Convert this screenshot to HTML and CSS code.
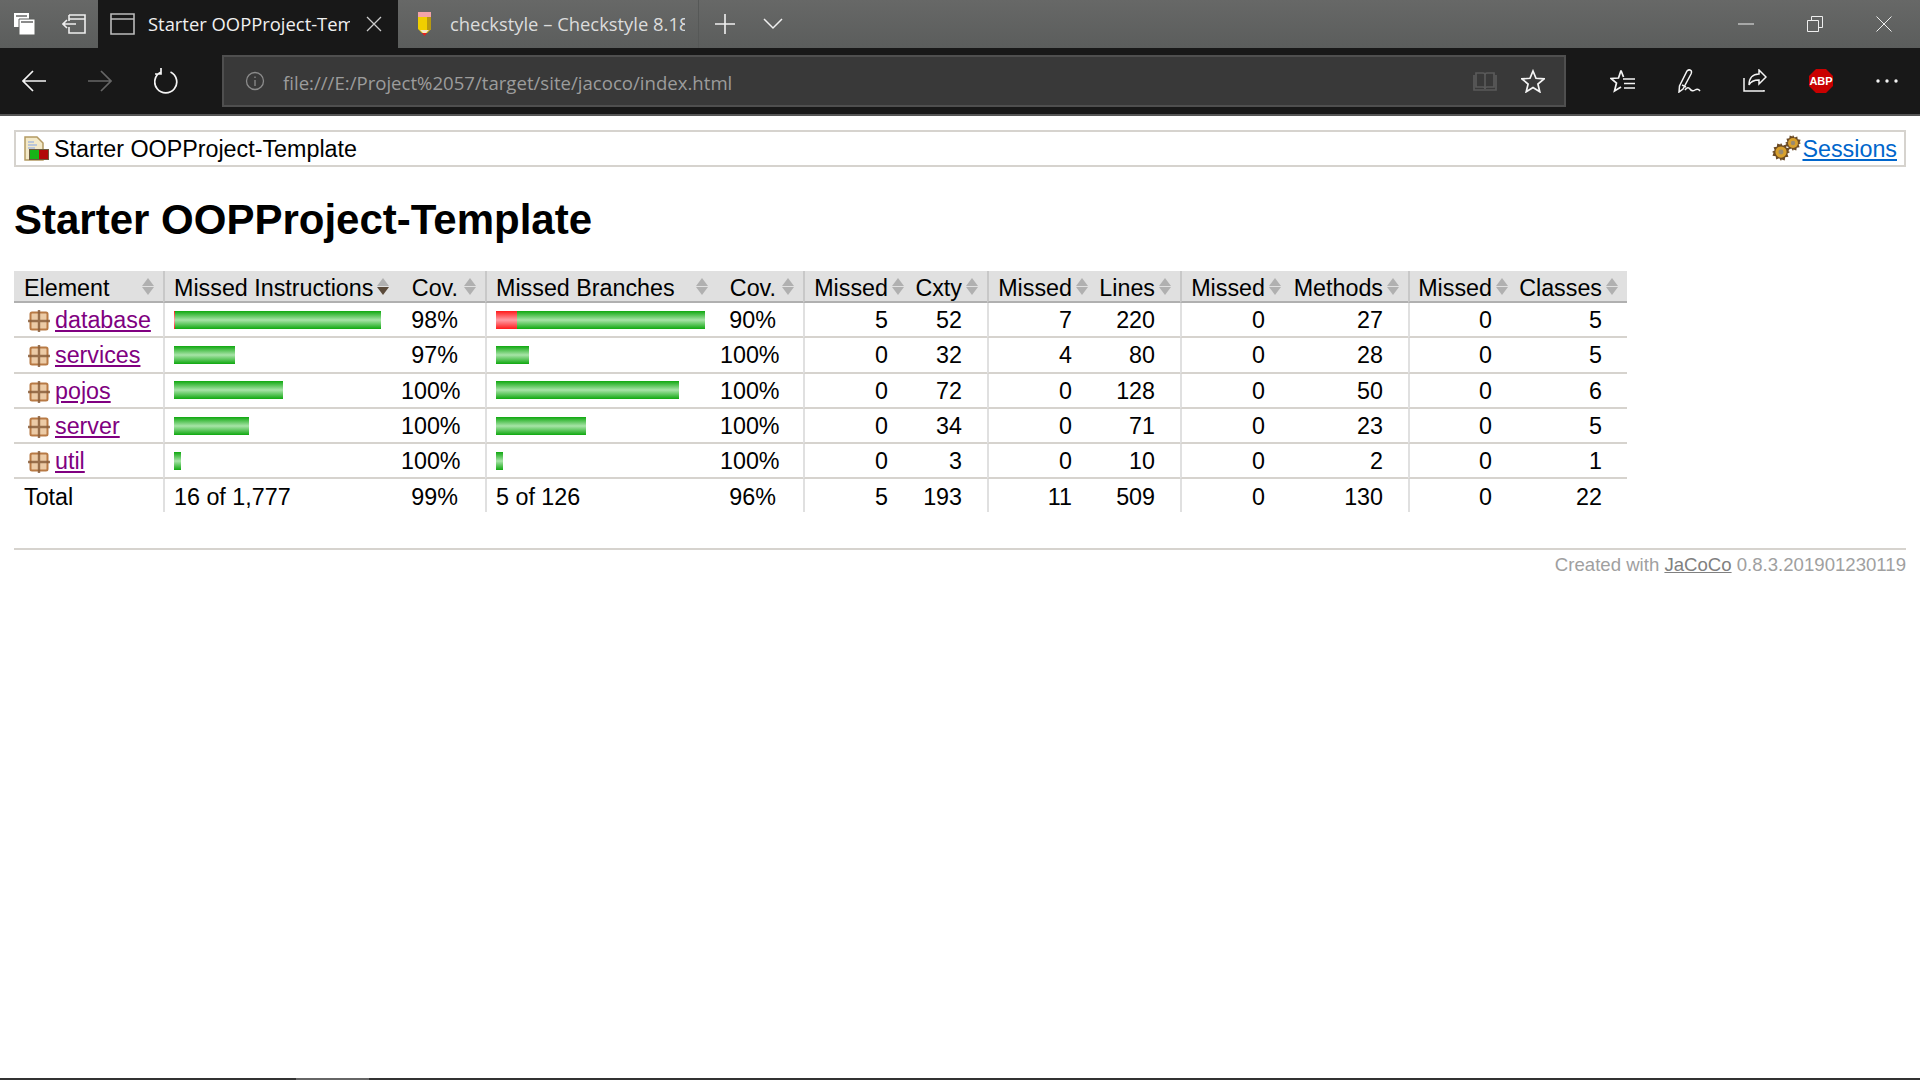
FILE: index.html
```html
<!DOCTYPE html>
<html>
  <head>
    <meta charset="utf-8" />
    <title>Starter OOPProject-Template</title>
    <link rel="stylesheet" href="styles.css">
  </head>
  <body>
    <svg class="defs" width="0" height="0">
      <defs>
        <symbol id="pkg" viewBox="0 0 22 22">
          <rect x="2.500" y="2.500" width="17" height="17" rx="1.500" fill="#eccba6" stroke="#b87a45" stroke-width="2"/>
          <path d="M11 0v22M0 11h22" stroke="#8a5f3c" stroke-width="2.400" opacity=".85"/>
        </symbol>
        <symbol id="gear" viewBox="0 0 16 16">
          <path d="M8 0l1.600 2.400 2.700-1 .4 2.900 2.900.4-1 2.700L16 8l-2.400 1.600 1 2.700-2.900.4-.4 2.900-2.700-1L8 16l-1.600-2.400-2.700 1-.4-2.900-2.900-.4 1-2.700L0 8l2.400-1.600-1-2.700 2.900-.4.4-2.900 2.700 1z" fill="#6b4a24"/>
          <circle cx="8" cy="8" r="5" fill="#d8a02c"/>
          <circle cx="8" cy="8" r="2.200" fill="#9a8a70"/>
        </symbol>
      </defs>
    </svg>

    <div class="tabbar">
      <div class="tab-tools">
        <div class="tool">
          <svg width="24" height="24" viewBox="0 0 24 24"><path d="M1 1h15v14H1z" fill="#fff"/><path d="M6 7h16v16H6z" fill="#fff" stroke="#5f615f"/><path d="M3 4h11M8 10h12" stroke="#666" stroke-width="1.400"/></svg>
        </div>
        <div class="tool">
          <svg width="24" height="24" viewBox="0 0 24 24" fill="none" stroke="#eee" stroke-width="1.600"><path d="M7 3h16v18H7v-6M7 9V3M7 7h16"/><path d="M1 12h13M5 8l-4 4 4 4"/></svg>
        </div>
      </div>
      <div class="tab tab-active">
        <svg class="tab-icon" width="25" height="24" viewBox="0 0 25 24" fill="none" stroke="#bbb" stroke-width="1.600"><path d="M1 2h23v20H1zM1 7h23"/></svg>
        <span class="tab-title">Starter OOPProject-Template</span>
        <svg class="tab-close" width="16" height="16" viewBox="0 0 16 16" stroke="#ccc" stroke-width="1.300"><path d="M1 1l14 14M15 1L1 15"/></svg>
      </div>
      <div class="tab">
        <svg class="tab-icon" width="25" height="26" viewBox="0 0 25 26"><path d="M6 1h13v5H6z" fill="#f2a3a8"/><path d="M6 6h13v12l-4 4h-5l-4-4z" fill="#f0cf00"/><path d="M15 6h4v12l-4 4z" fill="#b89a10"/><path d="M8 19h9l-3 3h-3z" fill="#f6e9c8"/><path d="M10 22h5l-2.500 3z" fill="#e8211c"/></svg>
        <span class="tab-title tab-title-dim">checkstyle – Checkstyle 8.18</span>
      </div>
      <div class="tab-btn tab-plus">
        <svg width="20" height="20" viewBox="0 0 20 20" stroke="#f0f0f0" stroke-width="1.600"><path d="M10 0v20M0 10h20"/></svg>
      </div>
      <div class="tab-btn tab-more">
        <svg width="20" height="12" viewBox="0 0 20 12" fill="none" stroke="#f0f0f0" stroke-width="1.500"><path d="M1 1l9 9 9-9"/></svg>
      </div>
      <div class="spacer"></div>
      <div class="winbtn">
        <svg width="16" height="2" viewBox="0 0 16 2" stroke="#eee"><path d="M0 1h16"/></svg>
      </div>
      <div class="winbtn">
        <svg width="16" height="16" viewBox="0 0 16 16" fill="none" stroke="#eee"><path d="M.5 4.500h11v11H.5zM4.500 4V.5h11v11H12"/></svg>
      </div>
      <div class="winbtn">
        <svg width="16" height="16" viewBox="0 0 16 16" stroke="#eee"><path d="M.5.5l15 15M15.500.5l-15 15"/></svg>
      </div>
    </div>

    <div class="toolbar">
      <div class="navbtn">
        <svg width="24" height="24" viewBox="0 0 24 24" fill="none" stroke="#f4f4f4" stroke-width="1.700"><path d="M24 12H1M11 2L1 12l10 10"/></svg>
      </div>
      <div class="navbtn">
        <svg width="24" height="24" viewBox="0 0 24 24" fill="none" stroke="#666" stroke-width="1.700"><path d="M0 12h23M13 2l10 10-10 10"/></svg>
      </div>
      <div class="navbtn">
        <svg width="24" height="26" viewBox="0 0 24 26" fill="none" stroke="#f4f4f4" stroke-width="1.700"><path d="M7 4a11 11 0 1 0 9.500 0M7 0v6H1"/></svg>
      </div>
      <div class="addr">
        <svg class="addr-info" width="20" height="20" viewBox="0 0 20 20" fill="none" stroke="#8c8c8c" stroke-width="1.300"><circle cx="10" cy="10" r="8.500"/><path d="M10 9v6M10 5.500v1.500"/></svg>
        <span class="addr-url">file:///E:/Project%2057/target/site/jacoco/index.html</span>
        <svg class="addr-read" width="24" height="22" viewBox="0 0 24 22" fill="none" stroke="#5a5a5a" stroke-width="1.700"><path d="M3 3h7q2 0 2 2v14q0-2-2-2H3zM21 3h-7q-2 0-2 2v14q0-2 2-2h7zM1 5v15h22V5"/></svg>
        <svg class="addr-star" width="24" height="24" viewBox="0 0 24 24" fill="none" stroke="#f4f4f4" stroke-width="1.700"><path d="M12 2l3 7.300 8 .6-6.100 5.100 1.900 7.800L12 18.600l-6.800 4.200 1.900-7.800L1 9.900l8-.6z"/></svg>
      </div>
      <div class="actions">
        <div class="navbtn">
          <svg width="26" height="24" viewBox="0 0 26 24" fill="none" stroke="#f4f4f4" stroke-width="1.700"><path d="M11 1.500L8.500 9 1 9.500l5.500 4.500L4.500 22 11 18M13 10h12M14 14.500h11M14 19h11M11 1.500L13.500 8"/></svg>
        </div>
        <div class="navbtn">
          <svg width="24" height="24" viewBox="0 0 24 24" fill="none" stroke="#f4f4f4" stroke-width="1.500"><path d="M2 23l.5-6L10 2q2-2 4-.5 1 1.500 0 3.500L6 20zM5 16l4 2M8 21q3-4 5-1t5 1 5 1"/></svg>
        </div>
        <div class="navbtn">
          <svg width="24" height="24" viewBox="0 0 24 24" fill="none" stroke="#f4f4f4" stroke-width="1.500"><path d="M1 9v13h20v-1M16 1l7 7-7 7v-4c-5 0-8 1-10 5 0-7 4-11 10-11z"/></svg>
        </div>
        <div class="navbtn">
          <svg width="24" height="24" viewBox="0 0 24 24"><path d="M7 0h10l7 7v10l-7 7H7l-7-7V7z" fill="#c90000"/><text class="abp" x="12" y="16" text-anchor="middle">ABP</text></svg>
        </div>
        <div class="navbtn">
          <svg width="22" height="4" viewBox="0 0 22 4" fill="#f4f4f4"><circle cx="2" cy="2" r="1.700"/><circle cx="11" cy="2" r="1.700"/><circle cx="20" cy="2" r="1.700"/></svg>
        </div>
      </div>
    </div>

    <div class="page">
      <div class="breadcrumb">
        <svg class="crumb-icon" width="25" height="25" viewBox="0 0 25 25">
          <path d="M1 1h12l6 6v17H1z" fill="#f3e9c8" stroke="#b49a62" stroke-width="1.500"/>
          <path d="M4 6h6M4 9h9M4 12h7" stroke="#a9bbdc" stroke-width="1.400"/>
          <path d="M5 13h20v11H5z" fill="#6b5a3c"/>
          <path d="M6 14h9v9H6z" fill="#18b418"/>
          <path d="M15 14h9v9h-9z" fill="#b20a0a"/>
        </svg>
        <span class="crumb-text">Starter OOPProject-Template</span>
        <span class="sessions">
          <svg class="gear-one" width="18" height="18"><use href="#gear"/></svg>
          <svg class="gear-two" width="16" height="16"><use href="#gear"/></svg>
          <a class="el_session" href="#">Sessions</a>
        </span>
      </div>

      <h1>Starter OOPProject-Template</h1>

      <table class="coverage">
        <colgroup>
          <col class="c-el"><col class="c-mi"><col class="c-cov1"><col class="c-mb"><col class="c-cov2">
          <col class="c-m1"><col class="c-t1"><col class="c-m2"><col class="c-t2">
          <col class="c-m3"><col class="c-t3"><col class="c-m4"><col class="c-t4">
        </colgroup>
        <thead>
          <tr>
            <td class="sortable">Element</td>
            <td class="sortable down bar">Missed Instructions</td>
            <td class="sortable ctr2 cov">Cov.</td>
            <td class="sortable bar">Missed Branches</td>
            <td class="sortable ctr2 cov">Cov.</td>
            <td class="sortable ctr1 bar">Missed</td>
            <td class="sortable ctr2">Cxty</td>
            <td class="sortable ctr1 bar">Missed</td>
            <td class="sortable ctr2">Lines</td>
            <td class="sortable ctr1 bar">Missed</td>
            <td class="sortable ctr2">Methods</td>
            <td class="sortable ctr1 bar">Missed</td>
            <td class="sortable ctr2">Classes</td>
          </tr>
        </thead>
        <tbody>
          <tr>
            <td class="el"><svg class="el-icon" width="22" height="22"><use href="#pkg"/></svg><a href="#">database</a></td>
            <td class="bar"><span class="meter"><i class="red" style="width:1px"></i><i class="green" style="width:206px"></i></span></td>
            <td class="ctr2 cov">98%</td>
            <td class="bar"><span class="meter"><i class="red" style="width:21px"></i><i class="green" style="width:188px"></i></span></td>
            <td class="ctr2 cov">90%</td>
            <td class="ctr1 bar">5</td><td class="ctr2">52</td>
            <td class="ctr1 bar">7</td><td class="ctr2">220</td>
            <td class="ctr1 bar">0</td><td class="ctr2">27</td>
            <td class="ctr1 bar">0</td><td class="ctr2">5</td>
          </tr>
          <tr>
            <td class="el"><svg class="el-icon" width="22" height="22"><use href="#pkg"/></svg><a href="#">services</a></td>
            <td class="bar"><span class="meter"><i class="green" style="width:61px"></i></span></td>
            <td class="ctr2 cov">97%</td>
            <td class="bar"><span class="meter"><i class="green" style="width:33px"></i></span></td>
            <td class="ctr2 cov">100%</td>
            <td class="ctr1 bar">0</td><td class="ctr2">32</td>
            <td class="ctr1 bar">4</td><td class="ctr2">80</td>
            <td class="ctr1 bar">0</td><td class="ctr2">28</td>
            <td class="ctr1 bar">0</td><td class="ctr2">5</td>
          </tr>
          <tr>
            <td class="el"><svg class="el-icon" width="22" height="22"><use href="#pkg"/></svg><a href="#">pojos</a></td>
            <td class="bar"><span class="meter"><i class="green" style="width:109px"></i></span></td>
            <td class="ctr2 cov">100%</td>
            <td class="bar"><span class="meter"><i class="green" style="width:183px"></i></span></td>
            <td class="ctr2 cov">100%</td>
            <td class="ctr1 bar">0</td><td class="ctr2">72</td>
            <td class="ctr1 bar">0</td><td class="ctr2">128</td>
            <td class="ctr1 bar">0</td><td class="ctr2">50</td>
            <td class="ctr1 bar">0</td><td class="ctr2">6</td>
          </tr>
          <tr>
            <td class="el"><svg class="el-icon" width="22" height="22"><use href="#pkg"/></svg><a href="#">server</a></td>
            <td class="bar"><span class="meter"><i class="green" style="width:75px"></i></span></td>
            <td class="ctr2 cov">100%</td>
            <td class="bar"><span class="meter"><i class="green" style="width:90px"></i></span></td>
            <td class="ctr2 cov">100%</td>
            <td class="ctr1 bar">0</td><td class="ctr2">34</td>
            <td class="ctr1 bar">0</td><td class="ctr2">71</td>
            <td class="ctr1 bar">0</td><td class="ctr2">23</td>
            <td class="ctr1 bar">0</td><td class="ctr2">5</td>
          </tr>
          <tr>
            <td class="el"><svg class="el-icon" width="22" height="22"><use href="#pkg"/></svg><a href="#">util</a></td>
            <td class="bar"><span class="meter"><i class="green" style="width:7px"></i></span></td>
            <td class="ctr2 cov">100%</td>
            <td class="bar"><span class="meter"><i class="green" style="width:7px"></i></span></td>
            <td class="ctr2 cov">100%</td>
            <td class="ctr1 bar">0</td><td class="ctr2">3</td>
            <td class="ctr1 bar">0</td><td class="ctr2">10</td>
            <td class="ctr1 bar">0</td><td class="ctr2">2</td>
            <td class="ctr1 bar">0</td><td class="ctr2">1</td>
          </tr>
        </tbody>
        <tfoot>
          <tr>
            <td>Total</td>
            <td class="bar">16 of 1,777</td>
            <td class="ctr2 cov">99%</td>
            <td class="bar">5 of 126</td>
            <td class="ctr2 cov">96%</td>
            <td class="ctr1 bar">5</td><td class="ctr2">193</td>
            <td class="ctr1 bar">11</td><td class="ctr2">509</td>
            <td class="ctr1 bar">0</td><td class="ctr2">130</td>
            <td class="ctr1 bar">0</td><td class="ctr2">22</td>
          </tr>
        </tfoot>
      </table>

      <div class="footer">
        Created with <a href="#">JaCoCo</a> 0.8.3.201901230119
      </div>
    </div>

    <div class="taskline"><div class="taskline-thumb"></div></div>
  </body>
</html>
```

FILE: styles.css
```css
html {
  margin: 0px;
  padding: 0px;
}
body {
  display: flex;
  flex-direction: column;
  height: 1080px;
  margin: 0px;
  padding: 0px;
  overflow: hidden;
  background-color: #fff;
  font-family: 'Liberation Sans', Arial, sans-serif;
  font-size: 23.3px;
  color: #000;
}
.defs {
  position: absolute;
}

/* browser chrome */
.tabbar {
  display: flex;
  flex: none;
  height: 48px;
  padding-right: 2px;
  background: linear-gradient(#676867, #5b5d5c);
  font-family: 'Open Sans', sans-serif;
  font-size: 18.4px;
  color: #f0f0f0;
}
.tab-tools {
  display: flex;
  width: 98px;
}
.tool {
  display: flex;
  align-items: center;
  justify-content: center;
  width: 49px;
}
.tab {
  display: flex;
  align-items: center;
  box-sizing: border-box;
  width: 301px;
  padding-left: 14px;
  border-right: 1px solid #565857;
}
.tab-active {
  width: 300px;
  padding-left: 12px;
  border-right: none;
  background-color: #181818;
}
.tab-icon {
  flex: none;
  margin-right: 13px;
}
.tab-title {
  width: 202px;
  margin-top: -1px;
  white-space: nowrap;
  overflow: hidden;
}
.tab-title-dim {
  width: 235px;
  color: #dcdcdc;
}
.tab-close {
  flex: none;
  margin-left: 16px;
}
.tab-btn {
  display: flex;
  align-items: center;
  justify-content: center;
}
.tab-plus {
  width: 52px;
}
.tab-more {
  width: 44px;
}
.spacer {
  flex: 1;
}
.winbtn {
  display: flex;
  align-items: center;
  justify-content: center;
  width: 69px;
}
.toolbar {
  display: flex;
  flex: none;
  align-items: center;
  box-sizing: border-box;
  height: 68px;
  padding-left: 1px;
  background-color: #181818;
  border-bottom: 2px solid #555;
}
.navbtn {
  display: flex;
  flex: none;
  align-items: center;
  justify-content: center;
  width: 66px;
  height: 50px;
}
.addr {
  display: flex;
  flex: none;
  align-items: center;
  box-sizing: border-box;
  width: 1344px;
  height: 52px;
  margin-left: 23px;
  background-color: #393939;
  border: 2px solid #4f4f4f;
  font-family: 'Open Sans', sans-serif;
  font-size: 18.600px;
  color: #9c9c9c;
}
.addr-info {
  flex: none;
  margin-left: 21px;
}
.addr-url {
  flex: 1;
  margin-left: 18px;
  padding-top: 2px;
}
.addr-read {
  flex: none;
  margin-right: 24px;
}
.addr-star {
  flex: none;
  margin-right: 19px;
}
.actions {
  display: flex;
  margin-left: 24px;
}
.abp {
  font-family: 'Liberation Sans', sans-serif;
  font-size: 11px;
  font-weight: bold;
  fill: #fff;
}

/* report */
.page {
  flex: 1;
  padding: 14px 14px 0px 14px;
}
.breadcrumb {
  display: flex;
  align-items: center;
  box-sizing: border-box;
  height: 37px;
  padding: 0px 7px 0px 8px;
  border: 2px solid #d6d3ce;
}
.crumb-icon {
  flex: none;
  margin-right: 5px;
}
.crumb-text {
  flex: 1;
  padding-top: 2px;
}
.sessions {
  position: relative;
  padding-top: 2px;
  padding-left: 30px;
}
.gear-one {
  position: absolute;
  left: 0px;
  top: 9px;
}
.gear-two {
  position: absolute;
  left: 13px;
  top: 1px;
}
a {
  color: #800080;
}
.el_session {
  color: #0066cc;
}
h1 {
  margin: 30px 0px 0px 0px;
  font-size: 42px;
  line-height: 46px;
}
.coverage {
  width: 1613px;
  margin-top: 28px;
  border-collapse: separate;
  border-spacing: 0px;
  table-layout: fixed;
  white-space: nowrap;
}
.c-el { width: 149px; }
.c-mi { width: 238px; }
.c-cov1 { width: 84px; }
.c-mb { width: 235px; }
.c-cov2 { width: 83px; }
.c-m1 { width: 110px; }
.c-t1 { width: 74px; }
.c-m2 { width: 110px; }
.c-t2 { width: 83px; }
.c-m3 { width: 110px; }
.c-t3 { width: 118px; }
.c-m4 { width: 109px; }
.c-t4 { width: 110px; }
.coverage td {
  box-sizing: border-box;
  padding: 2px 10px 0px 10px;
}
.coverage .bar {
  padding-left: 9px;
  border-left: 2px solid #e0e0e0;
}
.ctr1, .ctr2 {
  text-align: right;
}
.coverage td.ctr2 {
  padding-left: 0px;
  padding-right: 25px;
}
.coverage td.cov {
  padding-right: 27px;
}
.coverage td.ctr1 {
  padding-left: 0px;
  padding-right: 25px;
}
.coverage thead td {
  height: 32px;
  padding-top: 4px;
  line-height: 26px;
  background-color: #e0e0e0;
  border-bottom: 2px solid #b0b0b0;
}
.coverage thead .bar {
  border-left-color: #c8c8c8;
}
.coverage tbody td {
  height: 35.300px;
  border-bottom: 2px solid #d6d3ce;
}
.coverage tfoot td {
  height: 33px;
  padding-top: 3px;
}
.coverage .meter {
  margin-top: -2px;
}
.sortable {
  position: relative;
}
.sortable::before, .sortable::after {
  content: "";
  position: absolute;
  right: 9px;
  border-left: 6px solid transparent;
  border-right: 6px solid transparent;
}
.sortable::before {
  top: 7px;
  border-bottom: 8px solid #b0b0b0;
}
.sortable::after {
  top: 16px;
  border-top: 8px solid #b0b0b0;
}
.sortable.bar:not(.ctr1)::before, .sortable.bar:not(.ctr1)::after {
  right: 12px;
}
.down::after {
  border-top-color: #5a4a3a;
}
.el-icon {
  margin-right: 5px;
  margin-left: 4px;
  vertical-align: -4px;
}
.meter {
  display: flex;
  height: 18px;
}
.meter i {
  display: block;
}
.green {
  background: linear-gradient(#0fa80f, #a8e4a8 50%, #0fa80f);
}
.red {
  background: linear-gradient(#ff1a1a, #ff9ea6 50%, #ff1a1a);
}
.footer {
  margin-top: 36px;
  padding-top: 4px;
  border-top: 2px solid #d6d3ce;
  text-align: right;
  font-size: 18.600px;
  color: #a0a0a0;
}
.footer a {
  color: #808080;
}
.taskline {
  flex: none;
  height: 2px;
  background-color: #333;
}
.taskline-thumb {
  width: 73px;
  height: 2px;
  margin-left: 296px;
  background-color: #666;
}
```
